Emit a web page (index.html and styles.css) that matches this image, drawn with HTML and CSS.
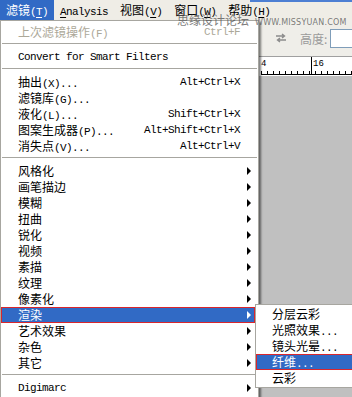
FILE: index.html
```html
<!DOCTYPE html>
<html lang="zh-CN">
<head>
    <meta charset="UTF-8">
    <title>滤镜菜单</title>
    <link rel="stylesheet" href="styles.css">
</head>
<body>
    <div class="menubar">
        <span class="mi on">滤镜<span class="k">(<u>T</u>)</span></span>
        <span class="mi"><span class="k"><u>A</u>nalysis</span></span>
        <span class="mi">视图<span class="k">(<u>V</u>)</span></span>
        <span class="mi">窗口<span class="k">(<u>W</u>)</span></span>
        <span class="mi">帮助<span class="k">(<u>H</u>)</span></span>
    </div>

    <div class="watermark">
        <span class="wm-zh">思缘设计论坛</span>
        <span class="wm-en">WWW.MISSYUAN.COM</span>
    </div>

    <div class="main">
        <div class="menu">
            <div class="row dis"><span>上次滤镜操作<span class="k">(F)</span></span><span class="key k">Ctrl+F</span></div>
            <div class="sep"></div>
            <div class="row"><span class="k">Convert for Smart Filters</span></div>
            <div class="sep"></div>
            <div class="row"><span>抽出<span class="k">(X)...</span></span><span class="key k">Alt+Ctrl+X</span></div>
            <div class="row"><span>滤镜库<span class="k">(G)...</span></span></div>
            <div class="row"><span>液化<span class="k">(L)...</span></span><span class="key k">Shift+Ctrl+X</span></div>
            <div class="row"><span>图案生成器<span class="k">(P)...</span></span><span class="key k">Alt+Shift+Ctrl+X</span></div>
            <div class="row"><span>消失点<span class="k">(V)...</span></span><span class="key k">Alt+Ctrl+V</span></div>
            <div class="sep"></div>
            <div class="row sub"><span>风格化</span></div>
            <div class="row sub"><span>画笔描边</span></div>
            <div class="row sub"><span>模糊</span></div>
            <div class="row sub"><span>扭曲</span></div>
            <div class="row sub"><span>锐化</span></div>
            <div class="row sub"><span>视频</span></div>
            <div class="row sub"><span>素描</span></div>
            <div class="row sub"><span>纹理</span></div>
            <div class="row sub"><span>像素化</span></div>
            <div class="row sub hl"><span>渲染</span></div>
            <div class="row sub"><span>艺术效果</span></div>
            <div class="row sub"><span>杂色</span></div>
            <div class="row sub"><span>其它</span></div>
            <div class="sep"></div>
            <div class="row sub"><span class="k">Digimarc</span></div>
        </div>

        <div class="work">
            <div class="toolbar">
                <svg class="swap" width="12" height="10" viewBox="0 0 12 10">
                    <path d="M1 3h8M7 1l2.5 2L7 5M11 7H3M5 5L2.5 7 5 9" fill="none" stroke="#8c8c8c" stroke-width="1.4"/>
                </svg>
                <span class="field-label">高度:</span>
                <span class="field"></span>
            </div>
            <div class="ruler">
                <span class="num n4">4</span>
                <span class="num n16">16</span>
                <span class="major"></span>
            </div>
        </div>
    </div>

    <div class="submenu">
        <div class="row"><span>分层云彩</span></div>
        <div class="row"><span>光照效果<span class="k">...</span></span></div>
        <div class="row"><span>镜头光晕<span class="k">...</span></span></div>
        <div class="row hl"><span>纤维<span class="k">...</span></span></div>
        <div class="row"><span>云彩</span></div>
    </div>
</body>
</html>
```

FILE: styles.css
```css
body {
    margin: 0;
    width: 352px;
    height: 397px;
    overflow: hidden;
    position: relative;
    font-family: "Noto Sans CJK SC", sans-serif;
    font-size: 12px;
    color: #000;
    background: #c0c0c0;
}
.k {
    font-family: "Liberation Mono", monospace;
    font-size: 11px;
    letter-spacing: -0.6px;
}
.menubar {
    height: 20px;
    display: flex;
    background: #efede6;
    position: relative;
}
.menubar::after {
    content: "";
    position: absolute;
    top: 0;
    left: 250px;
    right: 0;
    height: 2px;
    background: #4d7fd3;
}
.mi {
    padding: 0 6px;
    line-height: 20px;
    white-space: nowrap;
}
.mi.on {
    background: #316ac5;
    color: #fff;
}
.mi u {
    text-decoration-thickness: 1px;
    text-underline-offset: 2px;
}
.watermark {
    position: absolute;
    top: 11px;
    left: 177px;
    z-index: 5;
    display: flex;
    align-items: baseline;
    gap: 6px;
    color: rgba(80, 80, 80, 0.75);
    white-space: nowrap;
}
.wm-zh {
    font-size: 12px;
}
.wm-en {
    font-family: "DejaVu Sans", sans-serif;
    font-size: 8px;
    letter-spacing: 0.2px;
}
.main {
    display: flex;
    height: 377px;
}
.menu {
    flex: none;
    width: 257px;
    height: 400px;
    padding-top: 3px;
    background: #fff;
    border: 1px solid #a7a6a0;
    box-shadow: 2px 2px 2px rgba(0, 0, 0, 0.5);
    position: relative;
    z-index: 1;
}
.row {
    display: grid;
    grid-template-columns: 1fr auto 18px;
    height: 16px;
    line-height: 16px;
    padding-left: 17px;
    white-space: nowrap;
}
.row .key {
    grid-column: 2;
}
.row.sub::after {
    content: "";
    grid-column: 3;
    align-self: center;
    margin-left: 7px;
    width: 0;
    height: 0;
    border-left: 4px solid #000;
    border-top: 4px solid transparent;
    border-bottom: 4px solid transparent;
}
.row.dis {
    color: #aca899;
}
.row.hl {
    background: #316ac5;
    color: #fff;
    box-shadow: inset 0 0 0 1px #d9262c;
    margin-right: 3px;
    grid-template-columns: 1fr auto 15px;
}
.row.hl.sub::after {
    border-left-color: #fff;
}
.sep {
    height: 1px;
    margin: 3px 1px 5px;
    background: #a7a6a0;
}
.work {
    flex: 1;
    min-width: 0;
    overflow: hidden;
    display: flex;
    flex-direction: column;
}
.toolbar {
    height: 36px;
    display: flex;
    align-items: center;
    background: #efeee9;
    color: #9a9a9a;
    white-space: nowrap;
}
.toolbar > * {
    flex: none;
}
.swap {
    margin-left: 16px;
}
.field-label {
    margin-left: 13px;
    font-size: 12px;
}
.field {
    margin-left: 3px;
    width: 40px;
    height: 17px;
    background: #fff;
    border: 1px solid #7f9db9;
}
.ruler {
    height: 19px;
    background: #fff;
    border-top: 1px solid #a0a0a0;
    position: relative;
}
.ruler::after {
    content: "";
    position: absolute;
    left: 2px;
    right: 0;
    top: 14px;
    height: 3px;
    border-bottom: 1px solid #000;
    background: repeating-linear-gradient(to right, #000 0 1px, transparent 1px 6px);
}
.num {
    position: absolute;
    top: 3px;
    font-family: "Liberation Mono", monospace;
    font-size: 9px;
    line-height: 9px;
}
.n4 {
    left: 2px;
}
.n16 {
    left: 54px;
}
.major {
    position: absolute;
    left: 52px;
    top: 0;
    width: 1px;
    height: 17px;
    background: #000;
}
.submenu {
    position: absolute;
    left: 255px;
    top: 304px;
    width: 120px;
    padding: 1px 0;
    background: #fff;
    border: 1px solid #a7a6a0;
    z-index: 2;
}
.submenu .row {
    display: block;
    padding-left: 16px;
}
.submenu .row.hl {
    margin-right: 0;
}
```
